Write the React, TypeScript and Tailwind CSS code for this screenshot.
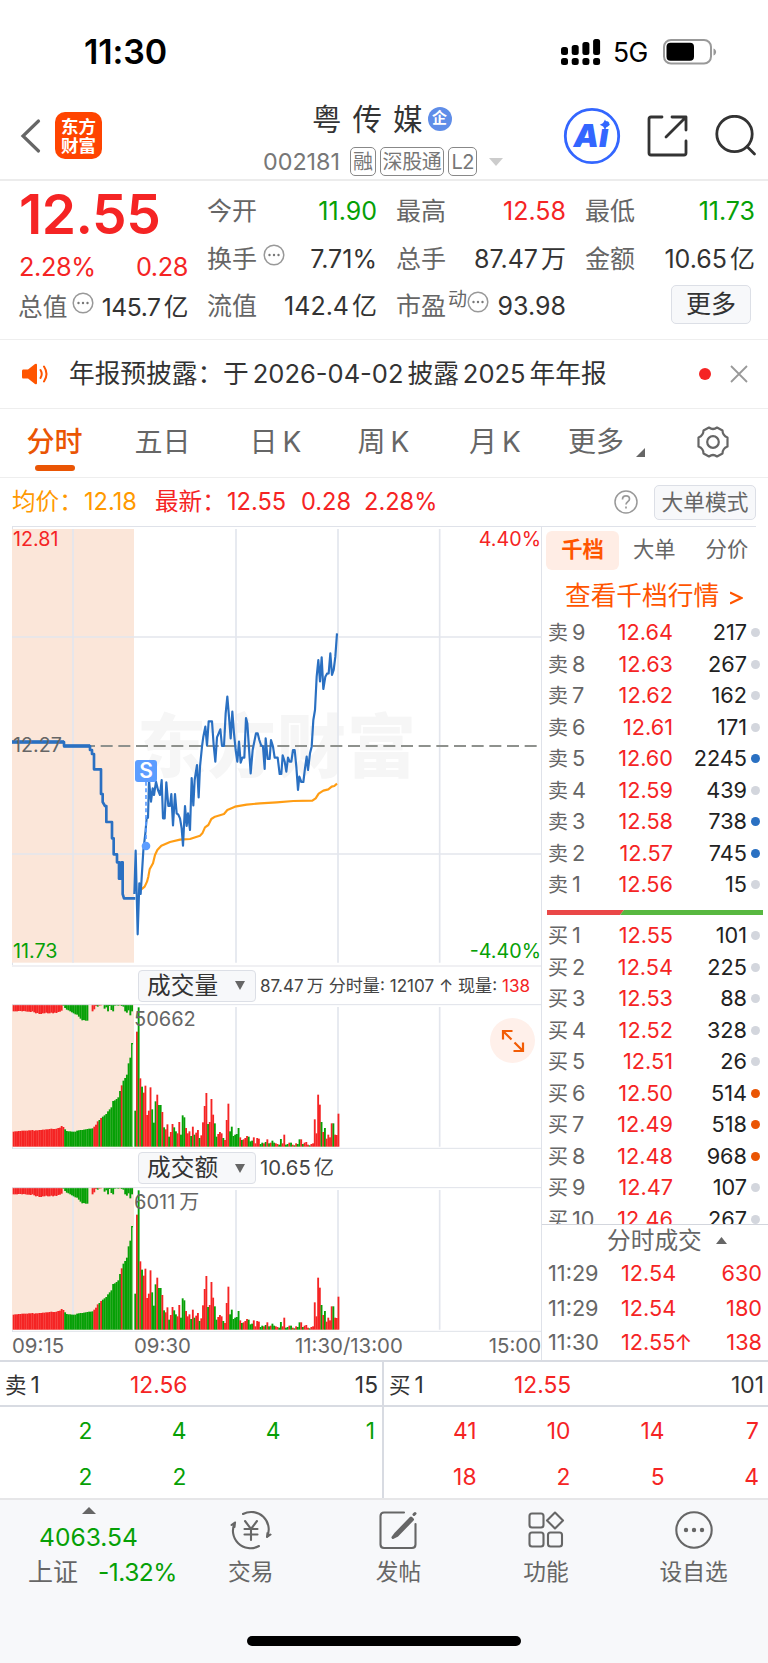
import type { ReactNode } from "react";
import { clsx } from "clsx";

const RED = "#f52424";
const GREEN = "#06a006";

type Level = {
  side: string;
  level: number;
  price: string;
  volume: number;
  dot?: "blue" | "orange";
};

const asks: Level[] = [
  { side: "卖", level: 9, price: "12.64", volume: 217 },
  { side: "卖", level: 8, price: "12.63", volume: 267 },
  { side: "卖", level: 7, price: "12.62", volume: 162 },
  { side: "卖", level: 6, price: "12.61", volume: 171 },
  { side: "卖", level: 5, price: "12.60", volume: 2245, dot: "blue" },
  { side: "卖", level: 4, price: "12.59", volume: 439 },
  { side: "卖", level: 3, price: "12.58", volume: 738, dot: "blue" },
  { side: "卖", level: 2, price: "12.57", volume: 745, dot: "blue" },
  { side: "卖", level: 1, price: "12.56", volume: 15 },
];

const bids: Level[] = [
  { side: "买", level: 1, price: "12.55", volume: 101 },
  { side: "买", level: 2, price: "12.54", volume: 225 },
  { side: "买", level: 3, price: "12.53", volume: 88 },
  { side: "买", level: 4, price: "12.52", volume: 328 },
  { side: "买", level: 5, price: "12.51", volume: 26 },
  { side: "买", level: 6, price: "12.50", volume: 514, dot: "orange" },
  { side: "买", level: 7, price: "12.49", volume: 518, dot: "orange" },
  { side: "买", level: 8, price: "12.48", volume: 968, dot: "orange" },
  { side: "买", level: 9, price: "12.47", volume: 107 },
  { side: "买", level: 10, price: "12.46", volume: 267 },
];

const trades = [
  { time: "11:29", price: "12.54", volume: 630 },
  { time: "11:29", price: "12.54", volume: 180 },
  { time: "11:30", price: "12.55", volume: 138, up: true },
];

// one entry per minute from 09:30, colour + height
const minuteBars =
  "g108 r345 g418 r205 g180 r162 r183 r95 r108 r178 g112 g72 g136 r156 g125 g125 r104 g58 r52 r67 g30 r44 r68 g58 g46 r40 r74 g36 g94 g88 r56 r40 r46 g32 r60 g36 r42 r50 g26 r34 r73 r122 r161 g68 r74 r143 r96 g70 g30 r38 r44 r40 g26 r20 r80 r129 g46 g60 g32 g36 g38 g56 r28 g20 r22 r26 r32 g30 g16 g18 r28 r10 r26 r24 g8 g12 r10 g14 r22 g10 r12 g18 g12 r10 r8 g6 g23 r10 r36 g6 g8 r12 g12 r6 g4 r10 g8 g22 r22 g8 r12 r14 r6 g4 r8 r10 r82 r40 r156 r126 g74 r44 g56 r24 r36 r28 r70 g70 r36 r35 r99".split(
    " "
  );

// call auction, matched volume
const auctionBars =
  "r45 r46 r46 r47 r47 r48 r48 r48 r48 r49 r49 r50 r48 r49 r49 r50 r50 r51 r51 r52 r52 r53 r54 r53 r53 r54 r56 r57 r62 r59 g52 g47 g46 g46 g45 g45 g45 g48 g49 g50 g50 g51 g52 g53 g54 g54 g55 r60 r66 r76 g80 r86 g90 g94 g98 g106 g112 g118 g137 g139 g143 g148 g167 r184 g198 g206 g216 g250 g267 g311".split(
    " "
  );

// call auction, unmatched volume hanging from the top
const unmatchedBars =
  "r20 r20 r20 r19 r19 r20 r19 r20 r21 r21 r22 r20 r23 r26 r25 r28 r28 r26 r26 r24 r26 r26 r24 r26 r24 r25 r22 r21 r18 g3 g10 g15 g17 g20 g23 g26 g29 g30 g36 g42 g47 g46 g48 g48 g0 g0 r20 r14 r4 g6 r3 r2 g0 g12 g8 g20 g4 g16 g20 g3 g2 g3 r2 g4 g6 g20 g24 g17 g32 g20".split(
    " "
  );

function barRects(bars: string[], x0: number, step: number, base: number, hanging = false) {
  return bars.map((bar, i) => {
    const height = Number(bar.slice(1));
    return (
      <rect
        key={i}
        x={x0 + i * step}
        y={hanging ? base : base - height}
        width={step + 0.5}
        height={height}
        fill={bar[0] === "r" ? RED : GREEN}
      />
    );
  });
}

function StatusBar() {
  return (
    <div className="flex h-[97px] items-center pt-[6px] text-black">
      <div className="w-[561px] pl-[84px] text-[34px] font-semibold tracking-[-0.1px]">11:30</div>
      <svg width="40" height="28" viewBox="0 0 40 28">
        {[0, 1, 2, 3].map((i) => (
          <g key={i}>
            <rect x={i * 10.7} y={[9, 7, 4, 1][i]} width="7" height={[8, 10, 13, 16][i]} rx="2.5" />
            <rect x={i * 10.7} y="20" width="7" height="7" rx="2.5" />
          </g>
        ))}
      </svg>
      <div className="ml-[12px] w-[50px] pt-[2px] text-[26.5px] tracking-[-0.5px]">5G</div>
      <svg width="54" height="26" viewBox="0 0 54 26">
        <rect x="1" y="1" width="47" height="23.5" rx="7" fill="none" stroke="#999" strokeWidth="2" />
        <rect x="3.5" y="3.7" width="27.500" height="18" rx="4" />
        <path d="M50.500 9.500c3.500 1.200 3.500 5.800 0 7z" fill="#999" />
      </svg>
    </div>
  );
}

function Tag({ children }: { children: ReactNode }) {
  return (
    <span className="flex h-[29px] items-center rounded-[5px] border-[1.5px] border-[#888] px-[2px] text-[20px] tracking-[-0.4px]">
      {children}
    </span>
  );
}

function Header() {
  return (
    <header className="flex h-[84px] items-start border-b-2 border-[#ececec]">
      <div className="flex w-[263px] items-center pt-[15px] pl-[20px]">
        <svg width="22" height="36" viewBox="0 0 22 36" fill="none" stroke="#666" strokeWidth="3.200" strokeLinecap="round">
          <path d="M18.500 3 3 18l15.500 15" />
        </svg>
        <div className="ml-[13px] flex size-[47px] flex-col items-center justify-center rounded-[10px] bg-[#ff4400] text-[17.500px] leading-[19px] font-bold text-white">
          <span>东方</span>
          <span>财富</span>
        </div>
      </div>
      <div className="w-[290px]">
        <div className="flex h-[44px] items-center pl-[49px] text-[#333]">
          <span className="text-[29.5px] tracking-[11px]">粤传媒</span>
          <span className="mb-[1px] -ml-[6px] flex size-[24px] items-center justify-center rounded-full bg-[#5f8de8] text-[15px] font-bold text-white">
            企
          </span>
        </div>
        <div className="flex items-center gap-[4px] pt-[3.5px] text-[#777]">
          <span className="w-[83px] text-[23.3px]">002181</span>
          <Tag>融</Tag>
          <Tag>深股通</Tag>
          <Tag>L2</Tag>
          <svg className="ml-[8px]" width="14" height="8" viewBox="0 0 14 8">
            <path d="M0 0h14L7 8z" fill="#ccc" />
          </svg>
        </div>
      </div>
      <div className="flex items-center pt-[10px] pl-[10px]">
        <svg width="58" height="58" viewBox="0 0 58 58" fill="none">
          <circle cx="29" cy="29" r="26.7" stroke="#3366ff" strokeWidth="2.800" />
          <text x="10.500" y="39.500" fontSize="32" fontWeight="900" fontStyle="italic" fill="#3366ff">
            Ai
          </text>
          <path d="M42 12.500l1.800 3.400 3.400 1.800-3.400 1.800-1.800 3.400-1.800-3.400-3.400-1.800 3.400-1.800z" fill="#3366ff" />
        </svg>
        <svg className="ml-[26px]" width="42" height="42" viewBox="0 0 42 42" fill="none" stroke="#333" strokeWidth="2.800" strokeLinecap="round" strokeLinejoin="round">
          <path d="M15 2H4Q2 2 2 4v34q0 2 2 2h33q2 0 2-2V26M25 2h14v13M39 2 19 22" />
        </svg>
        <svg className="ml-[26px]" width="42" height="42" viewBox="0 0 42 42" fill="none" stroke="#333" strokeWidth="2.800" strokeLinecap="round">
          <circle cx="19.500" cy="19" r="17.700" />
          <path d="m32 31.500 7.500 7.500" />
        </svg>
      </div>
    </header>
  );
}

function MoreDots() {
  return (
    <svg className="mb-[9px] shrink-0" width="22" height="22" viewBox="0 0 22 22">
      <circle cx="11" cy="11" r="9.800" fill="none" stroke="#999" strokeWidth="1.500" />
      <circle cx="6.500" cy="11" r="1.200" fill="#777" />
      <circle cx="11" cy="11" r="1.200" fill="#777" />
      <circle cx="15.500" cy="11" r="1.200" fill="#777" />
    </svg>
  );
}

function Stat({ label, value, unit, tone, extra }: { label: string; value: string; unit?: string; tone?: string; extra?: ReactNode }) {
  return (
    <div className="flex h-[47.5px] items-center text-[25px]">
      <span className="-ml-[1px] text-[#666]">{label}</span>
      {extra}
      <span className={clsx("ml-auto", tone ?? "text-[#333]")}>
        {value}
        {unit && <span className="ml-[3px]">{unit}</span>}
      </span>
    </div>
  );
}

function Quote() {
  return (
    <section className="flex h-[159px] gap-[20px] border-b border-[#eee] pl-[19px]">
      <div className="w-[169px]">
        <div className="flex h-[67px] items-center text-[55px] font-semibold tracking-[-0.5px] text-[#f52424]">12.55</div>
        <div className="flex h-[38px] items-center justify-between text-[25.3px] tracking-[-0.4px] text-[#f52424]">
          <span>2.28%</span>
          <span>0.28</span>
        </div>
        <div className="flex h-[43px] items-center text-[24.7px] tracking-[-0.4px] text-[#333]">
          <span className="mr-[5px] -ml-[1px] tracking-normal text-[#666]">总值</span>
          <MoreDots />
          <span className="ml-auto">
            145.7<span className="ml-[3px]">亿</span>
          </span>
        </div>
      </div>
      <div className="w-[169px] pt-[7px]">
        <Stat label="今开" value="11.90" tone="text-[#06a006]" />
        <Stat label="换手" value="7.71%" extra={<span className="ml-[6px]"><MoreDots /></span>} />
        <Stat label="流值" value="142.4" unit="亿" />
      </div>
      <div className="w-[169px] pt-[7px]">
        <Stat label="最高" value="12.58" tone="text-[#f52424]" />
        <Stat label="总手" value="87.47" unit="万" />
        <Stat
          label="市盈"
          value="93.98"
          extra={
            <span className="flex items-center">
              <span className="mb-[14px] ml-[2px] text-[19px] leading-none text-[#666]">动</span>
              <MoreDots />
            </span>
          }
        />
      </div>
      <div className="w-[169px] pt-[7px]">
        <Stat label="最低" value="11.73" tone="text-[#06a006]" />
        <Stat label="金额" value="10.65" unit="亿" />
        <div className="mt-[2px] mr-[4px] ml-auto flex h-[39px] w-[80px] items-center justify-center rounded-[5px] border border-[#dcdfe6] bg-[#f7f8fa] text-[25px] text-[#333]">
          更多
        </div>
      </div>
    </section>
  );
}

function Notice() {
  return (
    <section className="flex h-[69px] items-center border-b border-[#eee] pl-[22px]">
      <svg width="28" height="24" viewBox="0 0 28 24">
        <path d="M1 7.500h5L13 2q2-1 2 1v18q0 2-2 1l-7-5.500H1Q0 16.500 0 15V9q0-1.500 1-1.500z" fill="#ff5500" />
        <path d="M18.500 8q2.500 4 0 8M22 4.500q5 7.500 0 15" fill="none" stroke="#ff5500" strokeWidth="2" strokeLinecap="round" />
      </svg>
      <div className="ml-[19px] w-[630px] text-[25.7px] whitespace-nowrap text-[#333]">
        年报预披露：于<span className="mx-[4px] text-[25.5px]">2026-04-02</span>披露
        <span className="mx-[4px] text-[25.5px]">2025</span>年年报
      </div>
      <span className="size-[12px] rounded-full bg-[#f52424]" />
      <svg className="ml-[19px]" width="18" height="18" viewBox="0 0 18 18" stroke="#999" strokeWidth="1.800">
        <path d="m1 1 16 16M17 1 1 17" />
      </svg>
    </section>
  );
}

function Tabs() {
  return (
    <nav className="flex h-[69px] border-b border-[#eee] text-[28px] text-[#666]">
      <div className="flex w-[109px] flex-col items-center pt-[13px] text-[#ea5504]">
        <span className="h-[42px] leading-[40px] font-medium">分时</span>
        <span className="mt-px h-[6px] w-[40px] rounded-full bg-[#ea5504]" />
      </div>
      <div className="flex w-[107px] justify-center pt-[13px] leading-[40px]">五日</div>
      <div className="flex w-[119px] justify-center gap-[5px] pt-[13px] leading-[40px]">日<span>K</span></div>
      <div className="flex w-[97px] justify-center gap-[5px] pt-[13px] leading-[40px]">周<span>K</span></div>
      <div className="flex w-[126px] justify-center gap-[5px] pt-[13px] leading-[40px]">月<span>K</span></div>
      <div className="flex w-[138px] pt-[13px] pl-[10px] leading-[40px]">
        更多
        <svg className="mt-[26px] ml-[12px]" width="9" height="9" viewBox="0 0 9 9">
          <path d="M9 0v9H0z" fill="#666" />
        </svg>
      </div>
      <svg className="mt-[16px]" width="34" height="34" viewBox="0 0 34 34" fill="none" stroke="#666" strokeWidth="2.200" strokeLinejoin="round">
        <path d="M13 2.500q4 3 8 0l5.500 3q0 5 5 7v9q-5 2-5 7l-5.500 3q-4-3-8 0l-5.500-3q0-5-5-7v-9q5-2 5-7z" />
        <circle cx="17" cy="17" r="5.800" />
      </svg>
    </nav>
  );
}

function PriceInfo() {
  return (
    <div className="flex h-[48px] items-center pl-[12px] text-[23.6px] whitespace-nowrap text-[#f52424]">
      <span className="w-[72px] text-[#ff9900]">均价：</span>
      <span className="w-[71px] text-[#ff9900]">12.18</span>
      <span className="w-[72px]">最新：</span>
      <span className="w-[74px]">12.55</span>
      <span className="w-[63px]">0.28</span>
      <span className="w-[250px]">2.28%</span>
      <svg width="24" height="24" viewBox="0 0 24 24" fill="none" stroke="#999" strokeWidth="1.500">
        <circle cx="12" cy="12" r="11" />
        <path d="M8.500 9.500c0-5 7-4.500 7-.500 0 2.500-3.500 2.800-3.500 5.500M12 16.500v2" strokeWidth="1.700" />
      </svg>
      <span className="ml-[16px] flex h-[35px] w-[102px] items-center justify-center rounded-[5px] border border-[#dcdfe6] bg-[#f7f8fa] text-[21.7px] text-[#666]">
        大单模式
      </span>
    </div>
  );
}

const pricePoints =
  "403,1122 407,992 413,1243 418,1090 422,1122 430,992 436,940 440,895 444,893 447,780 453,845 458,805 462,825 468,785 474,810 480,825 485,780 489,895 494,895 499,787 505,858 510,858 514,822 519,916 525,822 530,880 535,884 540,895 545,925 549,977 555,858 560,918 564,880 570,930 575,774 580,856 584,780 591,735 596,832 600,740 606,680 610,650 616,620 621,676 626,604 636,604 641,675 646,725 651,652 661,628 666,678 672,678 677,580 682,530 687,590 692,655 697,575 702,640 707,690 712,725 717,665 722,728 727,713 733,713 738,594 742,610 748,700 752,760 758,690 768,640 773,640 778,660 783,675 789,680 794,747 797,655 803,717 809,717 813,660 819,680 824,713 833,713 839,762 844,762 848,706 854,725 859,755 864,713 869,725 874,725 879,690 884,690 889,740 894,810 898,770 904,786 910,786 915,745 920,710 924,750 930,700 935,680 940,600 945,570 950,470 955,420 960,484 965,412 970,507 976,470 981,461 986,460 991,400 996,465 1001,450 1006,410 1011,340";

const averagePoints =
  "424,1108 434,1100 441,1085 445,1070 449,1048 459,1030 465,1005 472,990 484,977 510,966 540,959 570,957 600,947 607,940 615,922 625,915 634,897 645,890 672,882 682,870 705,860 740,854 780,850 830,847 880,843 937,842 947,835 956,821 970,812 985,808 995,800 1003,798 1011,791";

function PriceChart() {
  return (
    <div className="relative h-[438px] border-l border-[#dfe2e9] text-[19.7px] leading-[20px]">
      <div className="absolute top-[180px] left-[124px] text-[69px] leading-[80px] font-black tracking-[1px] text-[#f6f6f6]">
        东方财富
      </div>
      <svg className="absolute top-0 left-[-1px]" width="530" height="437" viewBox="36 21 1590 1311" fill="none">
        <rect x="36" y="27" width="366" height="1301" fill="#fbe6d9" />
        <g stroke="#e3e6ed" strokeWidth="5">
          <path d="M219 27V1328M708 27V1328M1014 27V1328M1319 27V1328" />
          <path d="M36 351H1626M36 1002H1626" />
        </g>
        <path d="M196 678H1620" stroke="#8e918d" strokeWidth="5.500" strokeDasharray="36 17" />
        <path d="M36 666H192V678H270V690H276V702H282V748H303V822H308V846L315 858H319V906H336V955H341V1003H351V1027H357V1076H366V1027H368V1122L372 1135H406" stroke="#2a70c2" strokeWidth="8" strokeLinejoin="round" />
        <path d="M36 666H192M190 678H270" stroke="#2a70c2" strokeWidth="11" />
        <path d="M362 1024V1076" stroke="#2a70c2" strokeWidth="10" />
        <polyline points={averagePoints} stroke="#ff9d14" strokeWidth="6.500" strokeLinejoin="round" />
        <polyline points={pricePoints} stroke="#2a70c2" strokeWidth="6.500" strokeLinejoin="round" />
        <path d="M438 785V965" stroke="#5c9dff" strokeWidth="5" strokeDasharray="12 8" />
        <circle cx="438" cy="978" r="13" fill="#5c9dff" />
      </svg>
      <span className="absolute top-[233px] left-[122px] flex size-[22px] items-center justify-center rounded-[3px] bg-[#5c9dff] text-[21px] font-semibold text-white">
        S
      </span>
      <span className="absolute top-[2px] left-0 text-[#f52424]">12.81</span>
      <span className="absolute top-[2px] right-0 text-[#f52424]">4.40%</span>
      <span className="absolute top-[208px] left-0 text-[#666]">12.27</span>
      <span className="absolute top-[414px] left-0 text-[#06a006]">11.73</span>
      <span className="absolute top-[414px] right-0 text-[#06a006]">-4.40%</span>
    </div>
  );
}

function VolumeChart({ peak, children }: { peak: ReactNode; children?: ReactNode }) {
  return (
    <div className="relative h-[145px] border-l border-[#dfe2e9]">
      <svg className="absolute top-0 left-[-1px]" width="530" height="145" viewBox="36 129 1590 435">
        <rect x="36" y="131" width="366" height="426" fill="#fbe6d9" />
        <path d="M219 138V557M708 138V557M1014 138V557M1319 138V557" stroke="#e3e6ed" strokeWidth="5" />
        {barRects(auctionBars, 38, 5.15, 557)}
        {barRects(unmatchedBars, 38, 5.15, 131, true)}
        <path d="M399 250V557" stroke="#fff" strokeWidth="3" />
        {barRects(minuteBars, 403, 5.08, 557)}
        <path d="M36 131H1626M36 562H1626" stroke="#dfe2e9" strokeWidth="3" />
      </svg>
      <span className="absolute top-[5px] left-[121px] text-[20px] leading-[20px] text-[#666]">{peak}</span>
      {children}
    </div>
  );
}

function IndicatorSelect({ label }: { label: string }) {
  return (
    <span className="ml-[126px] flex h-[32px] w-[118px] shrink-0 items-center justify-between rounded-[4px] border border-[#dcdfe6] bg-[#f7f8fa] pr-[10px] pl-[8px] text-[23.7px] text-[#333]">
      {label}
      <svg width="10" height="9" viewBox="0 0 10 9">
        <path d="M0 0h10L5 9z" fill="#666" />
      </svg>
    </span>
  );
}

function Charts() {
  return (
    <div className="flex w-[542px] flex-col border-r border-[#dfe2e9] pl-[12px]">
      <PriceChart />
      <div className="flex h-[39px] items-center border-t-2 border-[#f0f0f3] whitespace-nowrap">
        <IndicatorSelect label="成交量" />
        <span className="ml-[4px] text-[17.1px] text-[#444]">
          87.47<span className="ml-[3px]">万</span> 分时量: 12107 ↑ 现量: <span className="text-[#f52424]">138</span>
        </span>
      </div>
      <VolumeChart peak="50662">
        <span className="absolute top-[14px] right-[6px] flex size-[45px] items-center justify-center rounded-full bg-[#fff0ea]">
          <svg width="24" height="24" viewBox="0 0 24 24" fill="none" stroke="#f25c05" strokeWidth="2.200">
            <path d="M2 10.500V2h9.500M2 2l8.500 8.500M22 13.500V22h-9.500M22 22l-8.500-8.500" />
          </svg>
        </span>
      </VolumeChart>
      <div className="flex h-[38px] items-center">
        <IndicatorSelect label="成交额" />
        <span className="ml-[4px] text-[20.3px] text-[#444]">
          10.65<span className="ml-[3px]">亿</span>
        </span>
      </div>
      <VolumeChart peak={<>6011<span className="ml-[4px]">万</span></>} />
      <div className="flex h-[28px] items-center text-[20.4px] text-[#666]">
        <span className="w-[122px]">09:15</span>
        <span className="w-[161px]">09:30</span>
        <span>11:30/13:00</span>
        <span className="ml-auto">15:00</span>
      </div>
    </div>
  );
}

function LevelRow({ side, level, price, volume, dot }: Level) {
  return (
    <div className="flex h-[31.5px] shrink-0 items-center text-[21.7px]">
      <span className="w-[58px] whitespace-nowrap text-[#666]">
        <span className="mr-[4px] text-[20px]">{side}</span>
        {level}
      </span>
      <span className="w-[67px] text-right text-[#f52424]">{price}</span>
      <span className="w-[74px] text-right text-[#222]">{volume}</span>
      <span
        className={clsx(
          "ml-[4px] size-[9px] rounded-full",
          dot === "blue" && "bg-[#2a70c2]",
          dot === "orange" && "bg-[#ea5504]",
          !dot && "bg-[#d3d6dd]"
        )}
      />
    </div>
  );
}

function OrderBook() {
  return (
    <div className="flex w-[226px] flex-col">
      <div className="flex h-[48px] items-center pb-[2px] pl-[4px] text-[21.3px] text-[#666]">
        <span className="flex h-[39px] w-[73px] items-center justify-center rounded-[6px] bg-[#ffede5] font-bold text-[#ff5500]">千档</span>
        <span className="ml-[14px]">大单</span>
        <span className="ml-[30px]">分价</span>
      </div>
      <div className="flex h-[42px] items-center pl-[23px] text-[25.7px] text-[#ff5500]">
        查看千档行情
        <svg className="mt-[4px] ml-[11px]" width="13" height="14" viewBox="0 0 13 14" fill="none" stroke="#ff5500" strokeWidth="2.200">
          <path d="m0 1.500 11.500 5.500L0 12.500" />
        </svg>
      </div>
      <div className="flex h-[607px] flex-col overflow-hidden pl-[6px]">
        {asks.map((row) => (
          <LevelRow key={row.level} {...row} />
        ))}
        <svg className="mt-[9px] mb-[5.5px] ml-[-1px] shrink-0" width="216" height="5" viewBox="0 0 216 5">
          <path d="M0 0H77L73 5H0z" fill="#ea4848" />
          <path d="M77 0H216V5H73z" fill="#58b840" />
        </svg>
        {bids.map((row) => (
          <LevelRow key={row.level} {...row} />
        ))}
      </div>
      <div className="flex h-[32px] items-center border-t border-[#d3d6dd] pl-[65px] text-[23.7px] text-[#666]">
        分时成交
        <svg className="ml-[14px]" width="11" height="7" viewBox="0 0 11 7">
          <path d="M0 7h11L5.500 0z" fill="#666" />
        </svg>
      </div>
      {trades.map((trade, i) => (
        <div key={i} className="flex h-[34.6px] items-center pr-[6px] pl-[6px] text-[21.7px] text-[#f52424]">
          <span className="w-[73px] text-[#666]">{trade.time}</span>
          <span>{trade.price}</span>
          {trade.up && <span className="-ml-[1px]">↑</span>}
          <span className="ml-auto">{trade.volume}</span>
        </div>
      ))}
    </div>
  );
}

type QueueProps = {
  side: string;
  price: string;
  volume: number;
  orders: number[];
  tone: string;
  className?: string;
};

function Queue({ side, price, volume, orders, tone, className }: QueueProps) {
  return (
    <div className={clsx("h-full text-[22.8px]", className)}>
      <div className="flex h-[45px] items-center border-b-2 border-[#d8dbe2] pt-[4px] pr-[4px] pl-[5px] text-[#333]">
        <span className="w-[125px]">
          <span className="mr-[4px] text-[21.5px]">{side}</span>1
        </span>
        <span className="text-[#f52424]">{price}</span>
        <span className="ml-auto">{volume}</span>
      </div>
      <div className={clsx("grid grid-cols-[92.5px_94px_94px_94.5px] text-right", tone)}>
        {orders.map((order, i) => (
          <span key={i} className="h-[45.5px] leading-[47px]">
            {order}
          </span>
        ))}
      </div>
    </div>
  );
}

function NavItem({ label, children }: { label: string; children: ReactNode }) {
  return (
    <div className="flex w-[147.6px] flex-col items-center pt-[10px] text-[22.7px] text-[#666]">
      <svg width="42" height="40" viewBox="0 0 42 40" fill="none" stroke="#666" strokeWidth="2.100" strokeLinecap="round" strokeLinejoin="round">
        {children}
      </svg>
      <span className="mt-[4px] leading-[36px]">{label}</span>
    </div>
  );
}

function BottomBar() {
  return (
    <footer className="relative flex h-[165px] border-t-2 border-[#e6e6e8] bg-[#f7f8fa]">
      <div className="w-[177px] text-[24.6px] text-[#06a006]">
        <svg className="mt-[7px] ml-[82px]" width="14" height="7" viewBox="0 0 14 7">
          <path d="M0 7h14L7 0z" fill="#666" />
        </svg>
        <div className="mt-[6px] pl-[39px] leading-[34px]">4063.54</div>
        <div className="flex pl-[28px] leading-[36px] tracking-[-0.5px]">
          <span className="w-[72px] text-[25px] tracking-normal text-[#666]">上证</span>
          -1.32%
        </div>
      </div>
      <NavItem label="交易">
        <path d="M13 4A17.500 17.500 0 0 1 37 27M37 27l3.500-2.500M37 27l.5-4M29 36A17.500 17.500 0 0 1 5 12.500M5 12.500 1.500 15M5 12.500 4.500 17" />
        <path d="m15 11 6 8 6-8M14.500 19h13M14.500 24.500h13M21 19v11" />
      </NavItem>
      <NavItem label="发帖">
        <path d="M27 2.500H7q-3.500 0-3.500 3.500v28.500Q3.500 38 7 38h28q3.500 0 3.500-3.500V14" />
        <path d="M34 8 19 23.500l-3 4 4-2L35.500 9.500zM38 3.500l-1 1" strokeWidth="3" />
      </NavItem>
      <NavItem label="功能">
        <rect x="4.500" y="3.500" width="14" height="14" rx="2.500" />
        <rect x="4.500" y="22.500" width="14" height="14" rx="2.500" />
        <rect x="23" y="22.500" width="14" height="14" rx="2.500" />
        <path d="M30 2.500 38 10.500 30 18.500 22 10.500z" />
      </NavItem>
      <NavItem label="设自选">
        <circle cx="21" cy="20" r="17.700" />
        <g fill="#666" stroke="none">
          <circle cx="13" cy="20" r="2.200" />
          <circle cx="21" cy="20" r="2.200" />
          <circle cx="29" cy="20" r="2.200" />
        </g>
      </NavItem>
      <div className="absolute top-[136px] left-[247px] h-[10px] w-[274px] rounded-full bg-black" />
    </footer>
  );
}

export default function App() {
  return (
    <div className="h-[1663px] w-[768px] overflow-hidden bg-white font-['Inter','Noto_Sans_CJK_SC',sans-serif]">
      <StatusBar />
      <Header />
      <Quote />
      <Notice />
      <Tabs />
      <PriceInfo />
      <div className="mr-[12px] ml-[12px] h-px bg-[#dfe2e9]" />
      <div className="flex h-[833px]">
        <Charts />
        <OrderBook />
      </div>
      <div className="flex h-[138px] border-t-2 border-[#d8dbe2]">
        <Queue side="卖" price="12.56" volume={15} orders={[2, 4, 4, 1, 2, 2]} tone="text-[#06a006]" className="w-[384px] border-r-2 border-[#d8dbe2]" />
        <Queue side="买" price="12.55" volume={101} orders={[41, 10, 14, 7, 18, 2, 5, 4]} tone="text-[#f52424]" className="w-[384px]" />
      </div>
      <BottomBar />
    </div>
  );
}
